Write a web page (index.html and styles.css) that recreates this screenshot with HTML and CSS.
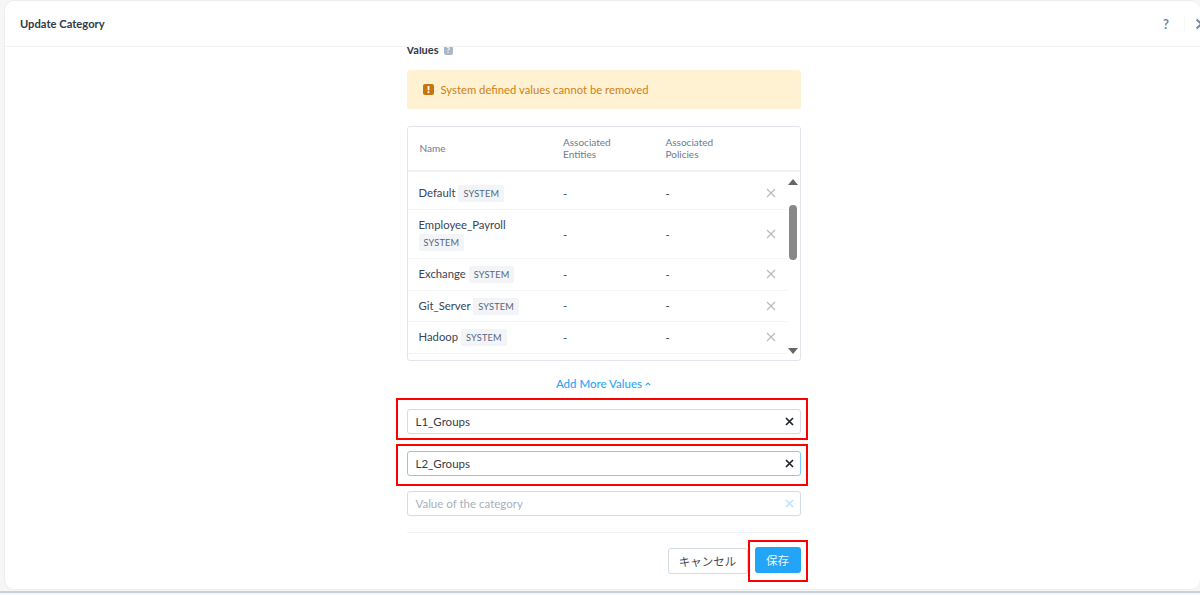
FILE: index.html
```html
<!DOCTYPE html>
<html lang="ja">
<head>
<meta charset="utf-8">
<title>Update Category</title>
<link rel="stylesheet" href="styles.css">
</head>
<body>
<div class="modal">
  <header class="modal-head">
    <h1 class="modal-title">Update Category</h1>
    <div class="head-actions">
      <span class="help">?</span>
      <span class="head-sep"></span>
      <svg class="head-close" width="8" height="12" viewBox="0 0 8 12"><path d="M1.5 1.5L6.5 6L1.5 10.5" fill="none" stroke="#6f86a3" stroke-width="2"/></svg>
    </div>
  </header>
  <div class="modal-body">
    <div class="column">
      <div class="values-label">Values <span class="info">?</span></div>
      <div class="alert">
        <svg class="alert-icon" width="11" height="11" viewBox="0 0 11 11"><rect width="11" height="11" rx="2" fill="#c9750f"/><rect x="4.6" y="2" width="1.8" height="4.4" fill="#fff"/><rect x="4.6" y="7.3" width="1.8" height="1.8" fill="#fff"/></svg>
        <span>System defined values cannot be removed</span>
      </div>
      <div class="table">
        <div class="thead">
          <div>Name</div>
          <div>Associated<br>Entities</div>
          <div>Associated<br>Policies</div>
        </div>
        <div class="tbody">
          <div class="rows">
            <div class="row r37"><div class="name">Default <span class="tag">SYSTEM</span></div><div>-</div><div>-</div><svg class="rm" width="10" height="10" viewBox="0 0 10 10"><path d="M1 1L9 9M9 1L1 9"/></svg></div>
            <div class="row r49"><div class="name">Employee_Payroll <span class="tag">SYSTEM</span></div><div>-</div><div>-</div><svg class="rm" width="10" height="10" viewBox="0 0 10 10"><path d="M1 1L9 9M9 1L1 9"/></svg></div>
            <div class="row r31"><div class="name">Exchange <span class="tag">SYSTEM</span></div><div>-</div><div>-</div><svg class="rm" width="10" height="10" viewBox="0 0 10 10"><path d="M1 1L9 9M9 1L1 9"/></svg></div>
            <div class="row r31"><div class="name">Git_Server <span class="tag">SYSTEM</span></div><div>-</div><div>-</div><svg class="rm" width="10" height="10" viewBox="0 0 10 10"><path d="M1 1L9 9M9 1L1 9"/></svg></div>
            <div class="row r31"><div class="name">Hadoop <span class="tag">SYSTEM</span></div><div>-</div><div>-</div><svg class="rm" width="10" height="10" viewBox="0 0 10 10"><path d="M1 1L9 9M9 1L1 9"/></svg></div>
          </div>
          <div class="scrollbar">
            <svg width="10" height="6" viewBox="0 0 10 6"><path d="M5 0L10 6H0Z" fill="#666"/></svg>
            <div class="track"><div class="thumb"></div></div>
            <svg width="10" height="6" viewBox="0 0 10 6"><path d="M5 6L10 0H0Z" fill="#666"/></svg>
          </div>
        </div>
      </div>
      <div class="add-more"><span class="add-text">Add More Values <svg width="6" height="4" viewBox="0 0 6 4"><path d="M.7 3.3L3 1L5.3 3.3" fill="none" stroke="#2ea6f5" stroke-width="1.1"/></svg></span></div>
      <div class="marked first">
        <div class="field"><span class="value">L1_Groups</span><svg class="clear" width="9" height="9" viewBox="0 0 9 9"><path d="M1 1L8 8M8 1L1 8"/></svg></div>
      </div>
      <div class="marked second">
        <div class="field active"><span class="value">L2_Groups</span><svg class="clear" width="9" height="9" viewBox="0 0 9 9"><path d="M1 1L8 8M8 1L1 8"/></svg></div>
      </div>
      <div class="field empty"><span class="placeholder">Value of the category</span><svg class="clear faint" width="9" height="9" viewBox="0 0 9 9"><path d="M1 1L8 8M8 1L1 8"/></svg></div>
      <div class="divider"></div>
      <div class="footer">
        <button class="btn cancel" type="button">キャンセル</button>
        <div class="save-mark"><button class="btn save" type="button">保存</button></div>
      </div>
    </div>
  </div>
</div>
<div class="page-strip"></div>
</body>
</html>
```
FILE: styles.css
```css
* { box-sizing: border-box; }
html, body { margin: 0; height: 595px; overflow: hidden; }
body {
  background: #f6f6f6;
  font-family: Lato, "Noto Sans CJK JP", sans-serif;
  color: #2f3a48;
  display: flex;
  flex-direction: column;
  padding-left: 4px;
}
.modal {
  height: 590px;
  flex: none;
  background: #fff;
  border-radius: 10px;
  border: 1px solid #eeeeee;
  border-right: 0;
  display: flex;
  flex-direction: column;
  overflow: hidden;
}
.page-strip { height: 2px; margin: 1px 0 0 -4px; background: #c9d2da; flex: none; }
.modal-head {
  height: 46px;
  flex: none;
  border-bottom: 1px solid #f3f3f3;
  display: flex;
  align-items: center;
  justify-content: space-between;
  padding-left: 15px;
}
.modal-title { margin: 0; font-size: 11.2px; font-weight: 700; color: #2f3a48; }
.head-actions { display: flex; align-items: center; margin-right: -3px; }
.help { font-size: 13px; font-weight: 700; color: #6f86a3; width: 8px; }
.head-sep { width: 1px; height: 14px; background: #f6f6f6; margin: 0 10px 0 13px; }
.modal-body { flex: 1; overflow: hidden; display: flex; justify-content: center; }
.column { width: 394px; margin-left: 2px; flex: none; }
.values-label { height: 14px; margin-top: -4px; font-size: 11px; font-weight: 700; line-height: 14px; display: flex; align-items: center; gap: 5px; }
.info { width: 9px; height: 9px; background: #a9b8c8; color: #fff; border-radius: 2px; font-size: 7px; line-height: 9px; text-align: center; }
.alert {
  height: 39px;
  margin-top: 13px;
  background: #fff2d3;
  border-radius: 3px;
  color: #cf7f16;
  font-size: 11.3px;
  display: flex;
  align-items: center;
  gap: 6px;
  padding-left: 16px;
}
.alert-icon { flex: none; margin-right: 1px; }
.table { height: 235px; margin-top: 17px; border: 1px solid #e2e6ec; border-radius: 3px; overflow: hidden; }
.thead {
  height: 45px;
  border-bottom: 2px solid #f0f1f3;
  display: grid;
  grid-template-columns: 143.5px 102.5px 1fr;
  align-items: center;
  padding: 0 0 1px 12px;
  font-size: 10px;
  line-height: 12px;
  color: #6b7a8f;
}
.tbody { display: flex; height: 188px; }
.rows { width: 379px; flex: none; }
.row {
  display: grid;
  grid-template-columns: 144.5px 102.5px 1fr 10px;
  align-items: center;
  padding: 0 11px 0 11px;
  border-bottom: 1px solid #f3f4f6;
  font-size: 11.3px;
  color: #3a4554;
}
.r37 { height: 38px; padding-top: 5px; }
.r49 { height: 49px; }
.r31 { height: 31.5px; }
.name { line-height: 17px; }
.tag {
  display: inline-block;
  height: 17px;
  padding: 0 5px;
  background: #f2f4f7;
  border-radius: 2px;
  font-size: 9.2px;
  line-height: 17px;
  letter-spacing: .2px;
  color: #56657a;
}
.r49 .name { margin-top: -1px; }
.r49 .tag { display: table; margin-top: 1px; }
.rm path { fill: none; stroke: #bcbcbc; stroke-width: 1.3; }
.scrollbar {
  flex: 1;
  display: flex;
  flex-direction: column;
  align-items: center;
  padding: 7px 0 6px;
}
.track { flex: 1; width: 8px; padding-top: 20px; }
.thumb { height: 55px; background: #888; border-radius: 4px; }
.add-more { height: 48px; display: flex; align-items: center; justify-content: center; padding-bottom: 3px; }
.add-text { font-size: 11.5px; font-weight: 500; color: #2ea6f5; display: flex; align-items: center; gap: 3px; }
.marked { border: 2px solid #ff0000; margin: 0 -7px 0 -11px; padding: 9px 5px 4px 9px; }
.first { height: 42px; margin-top: -11px; }
.second { height: 42px; margin-top: 4px; padding-top: 5px; }
.field {
  height: 25px;
  border: 1px solid #d5dbe3;
  border-radius: 3px;
  display: flex;
  align-items: center;
  justify-content: space-between;
  padding: 0 6px 0 8px;
  font-size: 11.5px;
  background: #fff;
}
.field.active { border-color: #7fcbf9; }
.field.empty { margin-top: 5px; }
.value { color: #333d4b; }
.placeholder { color: #a7b0bd; }
.clear path { fill: none; stroke: #1d2530; stroke-width: 1.7; }
.clear.faint path { stroke: #bfe4fb; }
.divider { height: 1px; margin-top: 16px; background: #f2f3f4; }
.footer { display: flex; justify-content: flex-end; align-items: center; margin-top: 15px; height: 26px; }
.btn { height: 26px; border-radius: 3px; font-family: inherit; font-size: 11.5px; padding: 0; }
.cancel { width: 80px; background: #fff; border: 1px solid #d5dbe3; color: #3f4a58; }
.save-mark { border: 2px solid #ff0000; width: 60px; height: 42px; margin-right: -7px; padding: 5px 0 0 5px; flex: none; }
.save { width: 46px; background: #22a5f7; border: 0; color: #e9f6ff; display: block; }
```
